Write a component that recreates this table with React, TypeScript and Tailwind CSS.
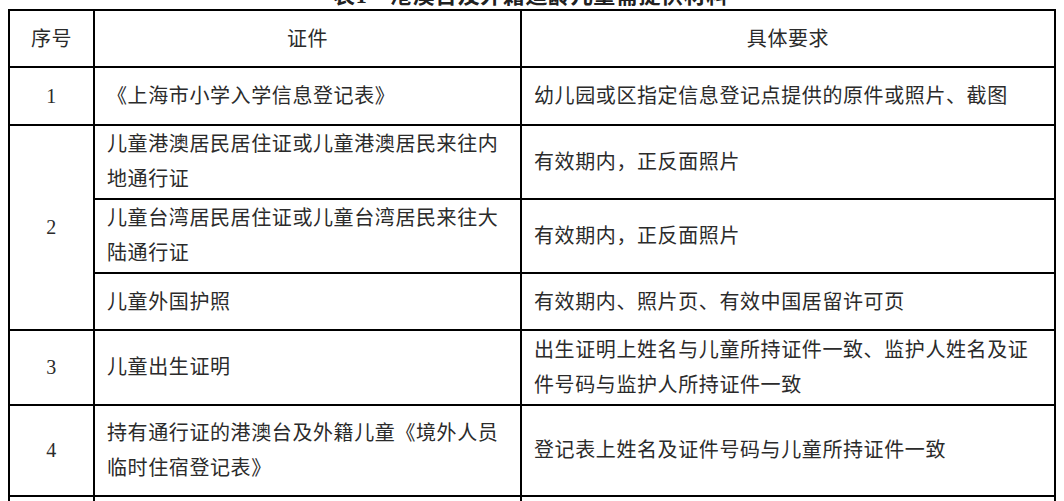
const font = { fontFamily: '"Liberation Serif", "Noto Sans CJK SC", serif' };

const cell = "border-2 border-black align-middle";
const txt = "px-[12px] text-left";

const App = () => {
  return (
    <div className="min-h-screen bg-white pl-[8px] pr-[10px] text-[20px] tracking-[0.6px] text-[#2b2b2b]" style={font}>
      {/* caption, only its lower edge shows in the shot */}
      <div className="flex h-[9px] items-end justify-center overflow-hidden">
        <div className="mb-[2px] text-[22px] font-bold leading-none text-[#222]">表1　港澳台及外籍适龄儿童需提供材料</div>
      </div>
      <table className="w-[1046px] table-fixed border-collapse">
        <colgroup>
          <col className="w-[85px]" />
          <col className="w-[427px]" />
          <col className="w-[534px]" />
        </colgroup>
        <tbody>
          <tr className="h-[57px]">
            <td className={`${cell} text-center`}>序号</td>
            <td className={`${cell} text-center`}>证件</td>
            <td className={`${cell} text-center`}>具体要求</td>
          </tr>
          <tr className="h-[58px]">
            <td className={`${cell} text-center`}>1</td>
            <td className={`${cell} ${txt}`}>《上海市小学入学信息登记表》</td>
            <td className={`${cell} ${txt}`}>幼儿园或区指定信息登记点提供的原件或照片、截图</td>
          </tr>
          <tr className="h-[74px] leading-[35px]">
            <td rowSpan={3} className={`${cell} text-center`}>2</td>
            <td className={`${cell} ${txt}`}>儿童港澳居民居住证或儿童港澳居民来往内地通行证</td>
            <td className={`${cell} ${txt}`}>有效期内，正反面照片</td>
          </tr>
          <tr className="h-[74px] leading-[35px]">
            <td className={`${cell} ${txt}`}>儿童台湾居民居住证或儿童台湾居民来往大陆通行证</td>
            <td className={`${cell} ${txt}`}>有效期内，正反面照片</td>
          </tr>
          <tr className="h-[57px]">
            <td className={`${cell} ${txt}`}>儿童外国护照</td>
            <td className={`${cell} ${txt}`}>有效期内、照片页、有效中国居留许可页</td>
          </tr>
          <tr className="h-[75px] leading-[35px]">
            <td className={`${cell} text-center`}>3</td>
            <td className={`${cell} ${txt}`}>儿童出生证明</td>
            <td className={`${cell} ${txt}`}>出生证明上姓名与儿童所持证件一致、监护人姓名及证件号码与监护人所持证件一致</td>
          </tr>
          <tr className="h-[91px] leading-[35px]">
            <td className={`${cell} text-center`}>4</td>
            <td className={`${cell} ${txt}`}>持有通行证的港澳台及外籍儿童《境外人员临时住宿登记表》</td>
            <td className={`${cell} ${txt}`}>登记表上姓名及证件号码与儿童所持证件一致</td>
          </tr>
          <tr className="h-[60px]">
            <td className={cell}></td>
            <td className={cell}></td>
            <td className={cell}></td>
          </tr>
        </tbody>
      </table>
    </div>
  );
};

export default App;
